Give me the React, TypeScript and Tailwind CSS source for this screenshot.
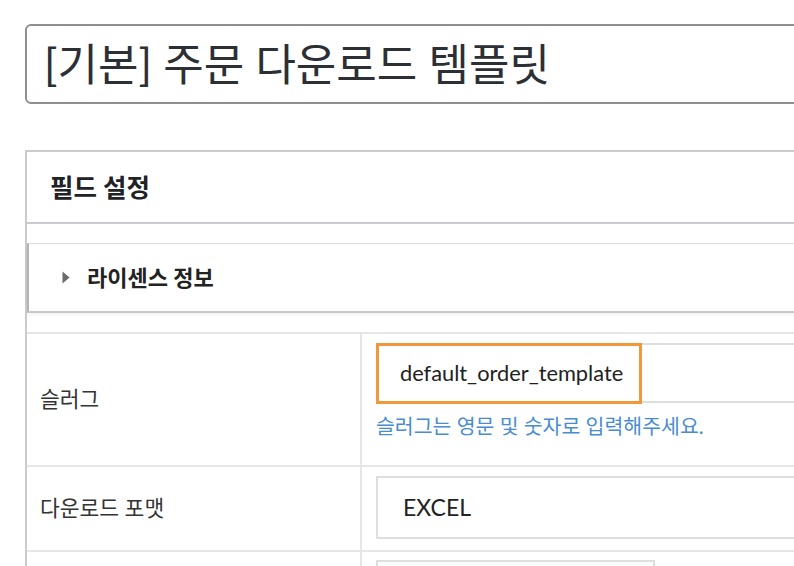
import React from "react";

const font = { fontFamily: "Lato, 'Noto Sans CJK KR', sans-serif" };

function TitleInput() {
  return (
    <div className="ml-[25px] mt-[24px] flex h-[80px] w-[800px] items-center rounded-[6px] border-2 border-[#8e8e93] pl-[17px]">
      <span className="text-[44px] leading-none text-[#2c2f34]">[기본] 주문 다운로드 템플릿</span>
    </div>
  );
}

function LicenseRow() {
  return (
    <div className="flex h-[70px] items-center border-t border-b-2 border-l-2 border-t-[#dcdcdc] border-b-[#c8c8c8] border-l-[#b4b4b8] pl-[33px] shadow-[0_2px_3px_rgba(0,0,0,0.06)]">
      <svg width="8" height="13" viewBox="0 0 8 13" className="mr-[17px]">
        <path d="M0.5 0.5 L7.5 6.5 L0.5 12.5 Z" fill="#6b6b6b" />
      </svg>
      <span className="text-[22px] font-bold text-[#222]">라이센스 정보</span>
    </div>
  );
}

function FieldRow({ label, height, children }: { label: string; height: string; children: React.ReactNode }) {
  return (
    <div className={`grid grid-cols-[335px_1fr] border-b-2 border-[#e6e6e6] ${height}`}>
      <div className="flex items-center border-r-2 border-[#e6e6e6] pl-[13px] text-[21.5px] text-[#333]">{label}</div>
      <div className="pl-[14px]">{children}</div>
    </div>
  );
}

export default function App() {
  return (
    <div className="h-[566px] w-[794px] overflow-hidden bg-white" style={font}>
      <TitleInput />
      <div className="ml-[25px] mt-[46px] w-[800px] border-t-2 border-l-2 border-[#cbcbcf]">
        <div className="flex h-[72px] items-center border-b-2 border-[#cbcbcf] pl-[23px]">
          <span className="text-[25.5px] font-bold text-[#1f2226]">필드 설정</span>
        </div>
        <div className="h-[19px]" />
        <LicenseRow />
        <div className="h-[19px]" />
        <div className="border-t-2 border-[#e6e6e6]">
          <FieldRow label="슬러그" height="h-[133px]">
            <div className="pt-[9px]">
              <div className="relative flex h-[60px] items-center border-2 border-[#dedede] pl-[22px]">
                <span className="text-[21.8px] text-[#222]">default_order_template</span>
                <div className="absolute -left-[2px] -top-[2px] h-[61px] w-[266px] border-[3px] border-[#f0993b]" />
              </div>
              <div className="mt-[8px] text-[20.5px] leading-[30px] text-[#4a8cd0]">슬러그는 영문 및 숫자로 입력해주세요.</div>
            </div>
          </FieldRow>
          <FieldRow label="다운로드 포맷" height="h-[85px]">
            <div className="pt-[9px]">
              <div className="flex h-[63px] items-center border-2 border-[#dedede] pl-[25px]">
                <span className="text-[23px] text-[#222]">EXCEL</span>
              </div>
            </div>
          </FieldRow>
          <FieldRow label="" height="h-[60px]">
            <div className="pt-[8px]">
              <div className="h-[40px] w-[279px] border-2 border-[#dedede]" />
            </div>
          </FieldRow>
        </div>
      </div>
    </div>
  );
}
